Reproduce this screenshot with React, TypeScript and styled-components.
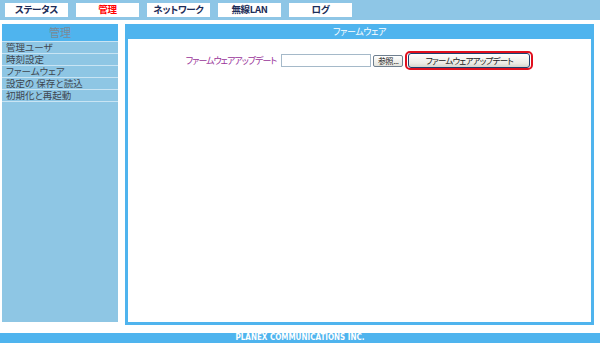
import React from "react";
import styled, { createGlobalStyle } from "styled-components";

const Global = createGlobalStyle`
  html, body { margin: 0; padding: 0; background: #ffffff; }
  body {
    font-family: "Noto Sans CJK JP", "Noto Sans", sans-serif;
    font-feature-settings: "palt";
  }
`;

const Page = styled.div`
  width: 600px;
  height: 346px;
  display: flex;
  flex-direction: column;
  overflow: hidden;
`;

const TopBar = styled.div`
  height: 20px;
  box-sizing: border-box;
  background: #8ec6e6;
  display: flex;
  align-items: flex-start;
  gap: 8px;
  padding: 3px 0 0 5px;
`;

const Tab = styled.div<{ $active?: boolean }>`
  width: 63px;
  height: 14px;
  background: #ffffff;
  display: flex;
  align-items: center;
  justify-content: center;
  font-size: 9.5px;
  font-weight: 700;
  line-height: 1;
  letter-spacing: -0.3px;
  color: ${(p) => (p.$active ? "#ff0000" : "#1c2c58")};
`;

const Body = styled.div`
  display: flex;
  align-items: flex-start;
  gap: 7px;
  padding: 4px 6px 0 2px;
`;

const Sidebar = styled.div`
  width: 116px;
  height: 298px;
  background: #8ec6e4;
  display: flex;
  flex-direction: column;
`;

const SideHeader = styled.div`
  height: 17px;
  background: #4fb4ee;
  color: #7a8a98;
  font-size: 11px;
  line-height: 1;
  display: flex;
  align-items: center;
  justify-content: center;
  border-bottom: 1px solid #c9e4f3;
`;

const SideItem = styled.div`
  height: 12px;
  box-sizing: border-box;
  display: flex;
  align-items: center;
  font-size: 9.5px;
  line-height: 1;
  color: #3e4650;
  padding-left: 4px;
  border-bottom: 1px solid #c9e4f3;
  white-space: nowrap;
`;

const Main = styled.div`
  width: 469px;
  height: 301px;
  box-sizing: border-box;
  border: 3px solid #4fb4ee;
  border-top: none;
  display: flex;
  flex-direction: column;
`;

const MainHeader = styled.div`
  height: 15px;
  margin: 0 -3px;
  background: #4fb4ee;
  color: #ffffff;
  font-size: 9px;
  line-height: 1;
  letter-spacing: -0.4px;
  display: flex;
  align-items: center;
  justify-content: center;
`;

const FormRow = styled.div`
  margin-top: 12px;
  display: flex;
  align-items: center;
  justify-content: center;
`;

const Label = styled.span`
  color: #993399;
  font-size: 9px;
  line-height: 1;
  letter-spacing: -1px;
  margin-right: 5px;
`;

const FileInput = styled.div`
  width: 90px;
  height: 13px;
  box-sizing: border-box;
  border: 1px solid #a5b9c9;
  background: #ffffff;
`;

const BrowseButton = styled.div`
  margin-left: 2px;
  width: 30px;
  height: 12px;
  box-sizing: border-box;
  border: 1px solid #6f7f8f;
  border-radius: 2px;
  background: linear-gradient(#ffffff, #e4e4dc);
  font-size: 8px;
  line-height: 1;
  letter-spacing: -0.4px;
  display: flex;
  align-items: center;
  justify-content: center;
  color: #222;
`;

const RedRing = styled.div`
  margin-left: 2px;
  box-sizing: border-box;
  border: 2px solid #e0101e;
  border-radius: 5px;
  padding: 0 1px;
`;

const UpdateButton = styled.div`
  width: 122px;
  height: 15px;
  box-sizing: border-box;
  border: 1px solid #1e3f6e;
  border-radius: 3px;
  background: linear-gradient(#ffffff, #ecece6 70%, #d6d6ce);
  font-size: 8.5px;
  line-height: 1;
  letter-spacing: -0.8px;
  color: #222;
  display: flex;
  align-items: center;
  justify-content: center;
`;

const Footer = styled.div`
  margin-top: 8px;
  height: 10px;
  background: #4fb4ee;
  color: #ffffff;
  font-family: "DejaVu Sans Condensed", "Liberation Sans", sans-serif;
  font-weight: 700;
  font-size: 8px;
  line-height: 1;
  display: flex;
  align-items: center;
  justify-content: center;
`;

const tabs = ["ステータス", "管理", "ネットワーク", "無線LAN", "ログ"];
const menu = ["管理ユーザ", "時刻設定", "ファームウェア", "設定の 保存と読込", "初期化と再起動"];

export default function App() {
  return (
    <Page>
      <Global />
      <TopBar>
        {tabs.map((t) => (
          <Tab key={t} $active={t === "管理"}>
            {t}
          </Tab>
        ))}
      </TopBar>
      <Body>
        <Sidebar>
          <SideHeader>管理</SideHeader>
          {menu.map((m) => (
            <SideItem key={m}>{m}</SideItem>
          ))}
        </Sidebar>
        <Main>
          <MainHeader>ファームウェア</MainHeader>
          <FormRow>
            <Label>ファームウェアアップデート</Label>
            <FileInput />
            <BrowseButton>参照...</BrowseButton>
            <RedRing>
              <UpdateButton>ファームウェアアップデート</UpdateButton>
            </RedRing>
          </FormRow>
        </Main>
      </Body>
      <Footer>PLANEX COMMUNICATIONS INC.</Footer>
    </Page>
  );
}
